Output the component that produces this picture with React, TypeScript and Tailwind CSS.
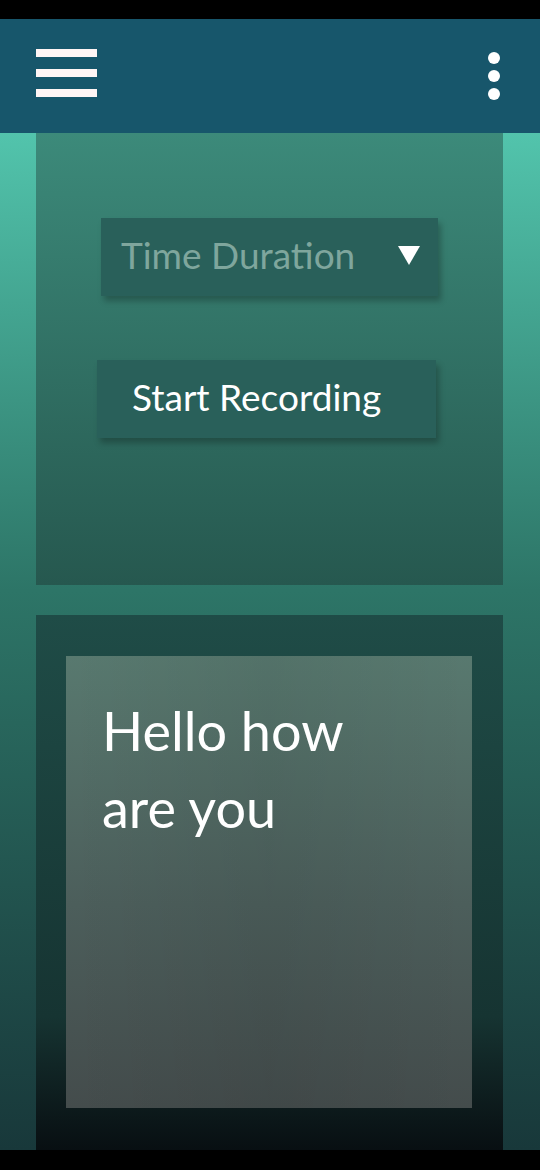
import React from 'react';

// Header with hamburger and overflow menu
const Header = () => (
  <div className="flex h-[114px] shrink-0 items-center justify-between bg-[#17566b] pl-9 pr-[40px]">
    <div className="mb-[6px] flex flex-col gap-3">
      <div className="h-2 w-[61px] bg-[#fff5f5]" />
      <div className="h-2 w-[61px] bg-[#fff5f5]" />
      <div className="h-2 w-[61px] bg-[#fff5f5]" />
    </div>
    <div className="flex flex-col gap-[6px]">
      <div className="h-3 w-3 rounded-full bg-white" />
      <div className="h-3 w-3 rounded-full bg-white" />
      <div className="h-3 w-3 rounded-full bg-white" />
    </div>
  </div>
);

export default function App() {
  return (
    <div
      className="flex h-[1170px] w-[540px] flex-col bg-black"
      style={{ fontFamily: 'Lato, "Open Sans", sans-serif' }}
    >
      <div className="h-[19px] shrink-0 bg-black" />
      <Header />
      <div className="flex h-[1017px] flex-col gap-[30px] bg-gradient-to-b from-[#52c4ac] via-[#2d7567] via-45% to-[#18383a] pl-9 pr-[37px]">
        {/* Controls card */}
        <div className="flex h-[452px] flex-col items-start bg-gradient-to-b from-[#3c8a7a] to-[#26584f] pl-[65px] pt-[85px]">
          <div className="flex h-[78px] w-[337px] items-center justify-between bg-[#29605a] pl-5 pr-[18px] shadow-[3px_5px_6px_rgba(0,0,0,0.25)]">
            <span className="-mt-1 text-[37px] text-[#7fa69d]">Time Duration</span>
            <svg width="22" height="19" viewBox="0 0 22 19" className="-mt-1">
              <polygon points="0,0 22,0 11,19" fill="#ffffff" />
            </svg>
          </div>
          <button className="-ml-1 mt-[64px] flex h-[78px] w-[339px] items-center bg-[#29605a] pb-1 pl-[35px] text-[37px] text-white shadow-[3px_5px_6px_rgba(0,0,0,0.25)]">
            Start Recording
          </button>
        </div>
        {/* Transcript card */}
        <div className="flex h-[535px] flex-col bg-gradient-to-b from-[#1f4c47] via-[#163432] via-75% to-[#080f12] pl-[30px] pr-[31px] pt-[41px]">
          <div className="h-[452px] bg-[linear-gradient(to_right,rgba(0,0,0,0)_0%,rgba(0,0,0,0.06)_50%,rgba(0,0,0,0)_100%),linear-gradient(to_bottom,#58796f_0%,#4c5e5b_55%,#444c4c_100%)] pl-9 pt-[36px]">
            <p className="text-[54px] leading-[77px] text-white">
              Hello how
              <br />
              are you
            </p>
          </div>
        </div>
      </div>
    </div>
  );
}
